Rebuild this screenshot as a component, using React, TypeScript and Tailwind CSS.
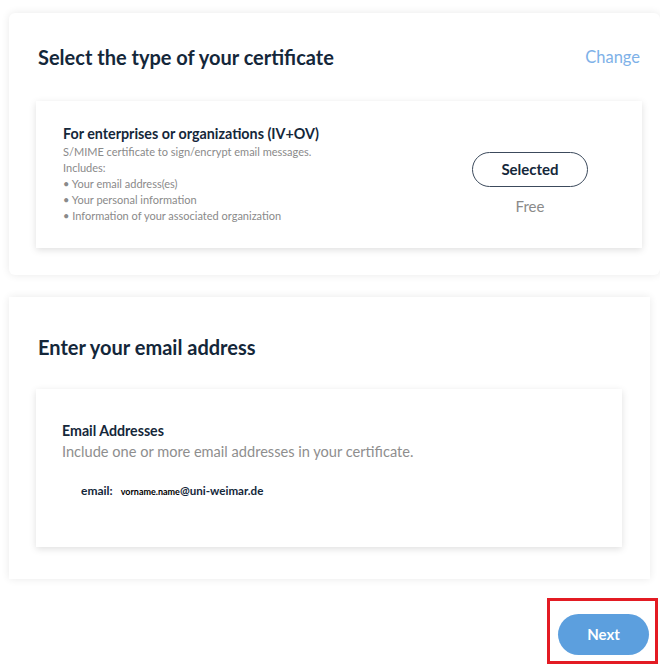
const navy = 'text-[#14273a]';

const CertificateCard = () => (
  <section className="ml-[9px] mt-[13px] rounded-md bg-white pt-[30px] pb-[27px] pl-[27px] shadow-[0_0_8px_rgba(0,0,0,0.09)]">
    <div className="flex items-center justify-between pr-[20px] pl-[2px]">
      <h2 className={`text-[20px] leading-[28px] font-bold ${navy}`}>Select the type of your certificate</h2>
      <a className="text-[16.5px] leading-[28px] text-[#7eb1e8]">Change</a>
    </div>
    <div className="mt-[30px] mr-[18px] flex justify-between bg-white pt-[23px] pb-[24px] pl-[27px] pr-[54px] shadow-[0_2px_7px_rgba(0,0,0,0.13)]">
      <div>
        <h3 className={`text-[14.3px] leading-[20px] font-bold ${navy}`}>For enterprises or organizations (IV+OV)</h3>
        <ul className="text-[11px] leading-[16px] text-[#8a8a8a]">
          <li>S/MIME certificate to sign/encrypt email messages.</li>
          <li>Includes:</li>
          <li>• Your email address(es)</li>
          <li>• Your personal information</li>
          <li>• Information of your associated organization</li>
        </ul>
      </div>
      <div className="mt-[28px] flex flex-col items-center">
        <button className={`h-[35px] w-[116px] rounded-full border border-[#3c4a5c] text-[15px] font-bold ${navy}`}>
          Selected
        </button>
        <span className="mt-[9px] text-[15px] leading-[20px] text-[#8a8a8a]">Free</span>
      </div>
    </div>
  </section>
);

const EmailCard = () => (
  <section className="mt-[22px] ml-[9px] mr-[10px] bg-white pt-[36px] pb-[32px] pl-[27px] pr-[28px] shadow-[0_0_8px_rgba(0,0,0,0.09)]">
    <h2 className={`pl-[2px] text-[20px] leading-[28px] font-bold ${navy}`}>Enter your email address</h2>
    <div className="mt-[28px] bg-white pt-[32px] pb-[46px] pl-[26px] shadow-[0_2px_7px_rgba(0,0,0,0.13)]">
      <h3 className={`text-[14.2px] leading-[20px] font-bold ${navy}`}>Email Addresses</h3>
      <p className="text-[14.6px] leading-[22px] text-[#8e8e8e]">Include one or more email addresses in your certificate.</p>
      <div className={`mt-[18px] ml-[19px] flex items-baseline font-bold ${navy}`}>
        <span className="mr-[8px] text-[12px] leading-[20px]">email:</span>
        <span className="text-[9px] text-black">vorname.name</span>
        <span className="text-[11.6px]">@uni-weimar.de</span>
      </div>
    </div>
  </section>
);

export default function App() {
  return (
    <div className="min-h-[666px] overflow-hidden bg-white font-['Lato',sans-serif]">
      <CertificateCard />
      <EmailCard />
      <div className="mt-[19px] mr-[2px] flex justify-end">
        <div className="border-[3px] border-[#e31b23] pt-[13px] pr-[6px] pb-[6px] pl-[8px]">
          <button className="h-[41px] w-[91px] rounded-full bg-[#5c9fde] text-[15px] font-bold text-white">Next</button>
        </div>
      </div>
    </div>
  );
}
